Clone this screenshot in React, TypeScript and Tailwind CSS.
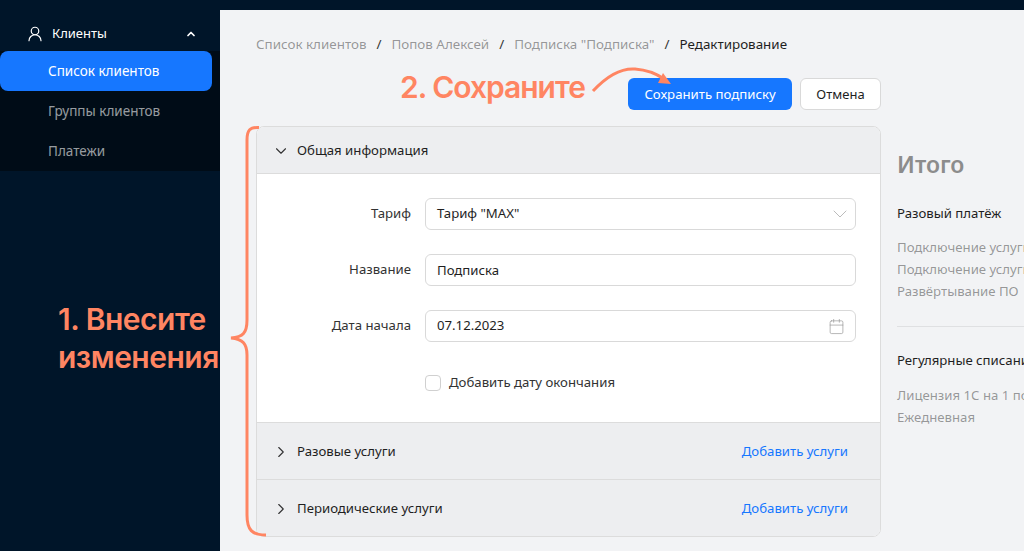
import { Calendar, ChevronDown, ChevronRight, ChevronUp, UserRound } from 'lucide-react'

const font = "font-['Noto_Sans','Open_Sans',sans-serif]"

function SideItem({ label, active }: { label: string; active?: boolean }) {
  return (
    <div
      className={`h-10 w-[212px] rounded-lg pl-12 flex items-center text-[13.5px] ${
        active ? 'bg-[#1677ff] text-white' : 'text-white/60'
      }`}
    >
      {label}
    </div>
  )
}

function Crumb({ label, last }: { label: string; last?: boolean }) {
  return (
    <>
      <span className={last ? 'text-[#1f1f1f]' : 'text-black/40'}>{label}</span>
      {!last && <span className="px-[10px] text-[#333]">/</span>}
    </>
  )
}

function Field({ label, children }: { label: string; children: React.ReactNode }) {
  return (
    <div className="flex items-center h-8">
      <div className="w-[168px] text-right text-[#333] pr-[14px]">{label}</div>
      {children}
    </div>
  )
}

function Section({ title }: { title: string }) {
  return (
    <div className="h-[57px] bg-[#edeef0] border-t border-[#dcdcdc] flex items-center pt-px pl-[15px] pr-8">
      <ChevronRight size={18} strokeWidth={1.5} className="text-[#333] mr-[7px]" />
      <span className="text-[#1f1f1f]">{title}</span>
      <span className="ml-auto text-[#1677ff]">Добавить услуги</span>
    </div>
  )
}

export default function App() {
  return (
    <div className={`${font} relative flex h-[551px] w-[1024px] overflow-hidden bg-[#001529] text-[13.2px]`}>
      <aside className="w-[220px] shrink-0 pt-[17px]">
        <div className="h-[34px] flex items-center pl-[26px] pr-[23px] text-white">
          <UserRound size={18} strokeWidth={1.6} className="mr-2" />
          <span className="text-[13px]">Клиенты</span>
          <ChevronUp size={12} strokeWidth={3.5} className="ml-auto" />
        </div>
        <div className="h-[120px] bg-[#000c17]">
          <SideItem label="Список клиентов" active />
          <SideItem label="Группы клиентов" />
          <SideItem label="Платежи" />
        </div>
      </aside>

      <main className="flex-1 mt-[10px] bg-[#f2f3f5] pl-9 pt-[25px] overflow-hidden">
        <div className="flex items-center h-[18px] text-[13.4px] whitespace-nowrap">
          <Crumb label="Список клиентов" />
          <Crumb label="Попов Алексей" />
          <Crumb label='Подписка "Подписка"' />
          <Crumb label="Редактирование" last />
        </div>

        <div className="flex justify-end gap-2 w-[625px] mt-[25px]">
          <button className="h-8 w-[164px] pt-px rounded-md bg-[#1677ff] text-white text-[13.2px]">Сохранить подписку</button>
          <button className="h-8 w-[81px] pt-px rounded-md bg-white border border-[#d9d9d9] text-[#1f1f1f] text-[13px]">Отмена</button>
        </div>

        <div className="flex mt-4 whitespace-nowrap">
          <div className="w-[625px] h-[411px] shrink-0 rounded-lg border border-[#dcdcdc] overflow-hidden bg-white">
            <div className="h-[47px] bg-[#edeef0] border-b border-[#dcdcdc] flex items-center pt-px pl-[15px]">
              <ChevronDown size={18} strokeWidth={1.5} className="text-[#333] mr-[7px]" />
              <span className="text-[#1f1f1f]">Общая информация</span>
            </div>

            <div className="h-[248px] pt-6 flex flex-col gap-6">
              <Field label="Тариф">
                <div className="w-[431px] h-8 rounded-md border border-[#d9d9d9] pl-[11px] pr-3 flex items-center justify-between text-[#1f1f1f]">
                  Тариф "MAX"
                  <ChevronDown size={24} strokeWidth={0.8} className="text-[#aaa] -mr-[9px]" />
                </div>
              </Field>
              <Field label="Название">
                <div className="w-[431px] h-8 rounded-md border border-[#d9d9d9] pl-[11px] pr-3 pt-px flex items-center text-[#1f1f1f]">Подписка</div>
              </Field>
              <Field label="Дата начала">
                <div className="w-[431px] h-8 rounded-md border border-[#d9d9d9] pl-[11px] pr-3 flex items-center justify-between text-[#1f1f1f]">
                  07.12.2023
                  <Calendar size={17} strokeWidth={1} className="text-[#999] -mr-[2px]" />
                </div>
              </Field>
              <label className="flex items-center h-8 mt-px pl-[168px] text-[#333]">
                <span className="size-4 rounded border border-[#d0d0d0] bg-white mr-2" />
                Добавить дату окончания
              </label>
            </div>

            <Section title="Разовые услуги" />
            <Section title="Периодические услуги" />
          </div>

          <div className="pl-4 pt-5 w-[143px] shrink-0 overflow-hidden">
            <div className="text-[23px] leading-9 font-semibold text-[#8c8c8c]">Итого</div>
            <div className="mt-[22px] text-[#1f1f1f]">Разовый платёж</div>
            <div className="mt-3 leading-[22px] text-black/40">
              <div>Подключение услуги</div>
              <div>Подключение услуги</div>
              <div>Развёртывание ПО</div>
            </div>
            <div className="mt-6 h-px w-[200px] bg-[#dfe0e2]" />
            <div className="mt-6 text-[#1f1f1f]">Регулярные списания</div>
            <div className="mt-[13px] leading-[22px] text-black/40">
              <div>Лицензия 1С на 1 пользователя</div>
              <div>Ежедневная</div>
            </div>
          </div>
        </div>
      </main>

      {/* annotations drawn over the screenshot */}
      <div className="absolute left-[400px] top-[69px] font-['Inter',sans-serif] font-semibold text-[30px] leading-9 tracking-[-1px] text-[#ff8562] whitespace-nowrap">
        2. Сохраните
      </div>
      <div className="absolute left-[58px] top-[300px] font-['Inter',sans-serif] font-semibold text-[30px] leading-[38px] tracking-[-0.5px] text-[#ff8562] whitespace-nowrap">
        1. Внесите
        <br />
        изменения
      </div>
      <svg className="absolute inset-0 pointer-events-none" width="1024" height="551" fill="none">
        <path
          d="M259 127.5C250 127 247 130 247 140L247 320C247 333 243 337 231 338C243 339 247 344 247 355L247 515C247 530 252 535 266 535"
          stroke="#ff8562"
          strokeWidth="3"
        />
        <path d="M593 91C605 78 620 68 635 69C648 70 657 74 664 79" stroke="#ff8562" strokeWidth="3" />
        <path d="M671 84L663 73L658 83Z" fill="#ff8562" />
      </svg>
    </div>
  )
}
